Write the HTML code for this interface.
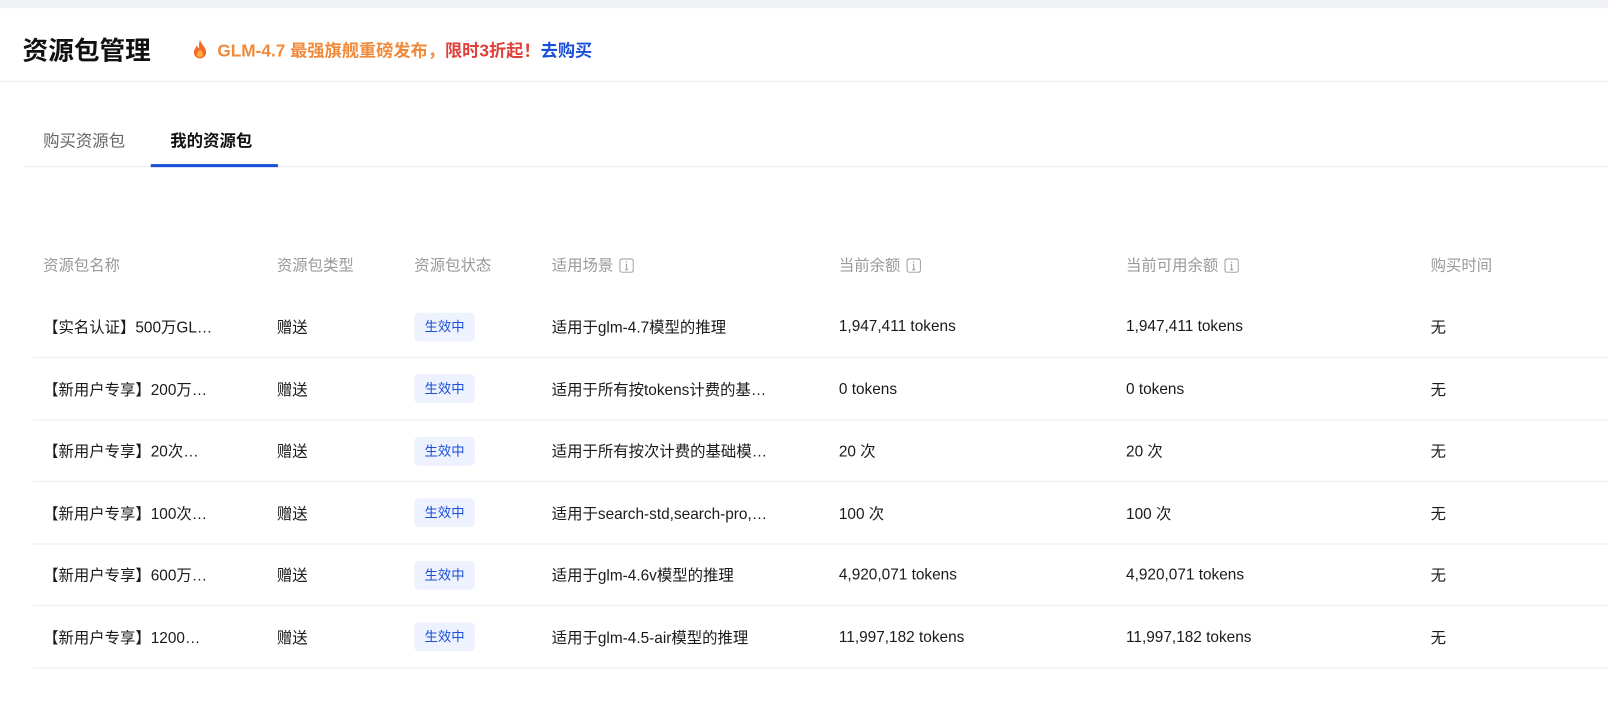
<!DOCTYPE html>
<html><head><meta charset="utf-8"><style>
*{margin:0;padding:0;box-sizing:border-box}
html,body{width:1608px;height:702px;overflow:hidden;background:#fff}
#w{width:1568px;height:685px;transform:scale(1.02551);transform-origin:0 0;font-family:"Liberation Sans","Noto Sans CJK SC",sans-serif;color:#1a1a1a;position:relative}
.top{height:8px;background:#f0f1f5}
.hdr{height:72px;border-bottom:1px solid #eceef2;position:relative}
.title{position:absolute;left:22px;top:22px;font-size:25px;font-weight:bold;color:#111}
.promo{position:absolute;left:186px;top:28px;font-size:16.8px;font-weight:bold;display:flex;align-items:center}
.tabs{position:absolute;left:24px;right:0;top:118px;height:45px;border-bottom:1px solid #eceef2}
.tab{position:absolute;top:6px;font-size:16px}
.ul{position:absolute;left:123px;width:124px;bottom:-1px;height:3px;background:#1a4fd8}
.th{position:absolute;top:248px;font-size:15px;color:#999;display:flex;align-items:center}
.row{position:absolute;left:32px;right:0;height:60.4px;border-bottom:1px solid #eceef2}
.c{position:absolute;top:0;height:100%;display:flex;align-items:center;font-size:15px;color:#1a1a1a;white-space:nowrap}
.badge{background:#eef2fe;color:#1a4fd8;font-size:13px;border-radius:4px;padding:0 10px;height:28px;line-height:28px}
.i{display:inline-block;width:14px;height:14px;margin-left:6px}
</style></head><body><div id="w">
<div class="top"></div>
<div class="hdr">
<div class="title">资源包管理</div>
<div class="promo"><svg width="18" height="20" viewBox="0 0 18 20" style="margin-right:8px"><path d="M9 1C10 5 15 8 15 13a6 6 0 0 1-12 0c0-3 2-4 3-7 1 2 1 3 2 3 0-3 0-6 1-8z" fill="#f46a2c"/><path d="M9 10c1 2 3 3 3 5a3 3 0 0 1-6 0c0-2 2-3 3-5z" fill="#fbb03b"/></svg><span style="color:#f08a3a">GLM-4.7 最强旗舰重磅发布，</span><span style="color:#e0403a">限时3折起！</span><span style="color:#1a4fd8">去购买</span></div>
</div>
<div class="tabs">
<div class="tab" style="left:18px;color:#666">购买资源包</div>
<div class="tab" style="left:142px;font-weight:bold;color:#111">我的资源包</div>
<div class="ul"></div>
</div>
<div class="th" style="left:42px">资源包名称</div>
<div class="th" style="left:270px">资源包类型</div>
<div class="th" style="left:404px">资源包状态</div>
<div class="th" style="left:538px">适用场景<svg class="i" viewBox="0 0 14 14"><rect x="0.5" y="0.5" width="13" height="13" rx="2" fill="none" stroke="#999"/><path d="M7 3v1.5M6 6h1v5M5.5 11h3" stroke="#999" fill="none"/></svg></div>
<div class="th" style="left:818px">当前余额<svg class="i" viewBox="0 0 14 14"><rect x="0.5" y="0.5" width="13" height="13" rx="2" fill="none" stroke="#999"/><path d="M7 3v1.5M6 6h1v5M5.5 11h3" stroke="#999" fill="none"/></svg></div>
<div class="th" style="left:1098px">当前可用余额<svg class="i" viewBox="0 0 14 14"><rect x="0.5" y="0.5" width="13" height="13" rx="2" fill="none" stroke="#999"/><path d="M7 3v1.5M6 6h1v5M5.5 11h3" stroke="#999" fill="none"/></svg></div>
<div class="th" style="left:1395px">购买时间</div>

<div class="row" style="top:289px"><div class="c" style="left:10px">【实名认证】500万GL…</div><div class="c" style="left:238px">赠送</div><div class="c" style="left:372px"><span class="badge">生效中</span></div><div class="c" style="left:506px">适用于glm-4.7模型的推理</div><div class="c" style="left:786px">1,947,411 tokens</div><div class="c" style="left:1066px">1,947,411 tokens</div><div class="c" style="left:1363px">无</div></div>
<div class="row" style="top:349.5px"><div class="c" style="left:10px">【新用户专享】200万…</div><div class="c" style="left:238px">赠送</div><div class="c" style="left:372px"><span class="badge">生效中</span></div><div class="c" style="left:506px">适用于所有按tokens计费的基…</div><div class="c" style="left:786px">0 tokens</div><div class="c" style="left:1066px">0 tokens</div><div class="c" style="left:1363px">无</div></div>
<div class="row" style="top:410px"><div class="c" style="left:10px">【新用户专享】20次…</div><div class="c" style="left:238px">赠送</div><div class="c" style="left:372px"><span class="badge">生效中</span></div><div class="c" style="left:506px">适用于所有按次计费的基础模…</div><div class="c" style="left:786px">20 次</div><div class="c" style="left:1066px">20 次</div><div class="c" style="left:1363px">无</div></div>
<div class="row" style="top:470.5px"><div class="c" style="left:10px">【新用户专享】100次…</div><div class="c" style="left:238px">赠送</div><div class="c" style="left:372px"><span class="badge">生效中</span></div><div class="c" style="left:506px">适用于search-std,search-pro,…</div><div class="c" style="left:786px">100 次</div><div class="c" style="left:1066px">100 次</div><div class="c" style="left:1363px">无</div></div>
<div class="row" style="top:531px"><div class="c" style="left:10px">【新用户专享】600万…</div><div class="c" style="left:238px">赠送</div><div class="c" style="left:372px"><span class="badge">生效中</span></div><div class="c" style="left:506px">适用于glm-4.6v模型的推理</div><div class="c" style="left:786px">4,920,071 tokens</div><div class="c" style="left:1066px">4,920,071 tokens</div><div class="c" style="left:1363px">无</div></div>
<div class="row" style="top:591.5px"><div class="c" style="left:10px">【新用户专享】1200…</div><div class="c" style="left:238px">赠送</div><div class="c" style="left:372px"><span class="badge">生效中</span></div><div class="c" style="left:506px">适用于glm-4.5-air模型的推理</div><div class="c" style="left:786px">11,997,182 tokens</div><div class="c" style="left:1066px">11,997,182 tokens</div><div class="c" style="left:1363px">无</div></div>
</div></body></html>
